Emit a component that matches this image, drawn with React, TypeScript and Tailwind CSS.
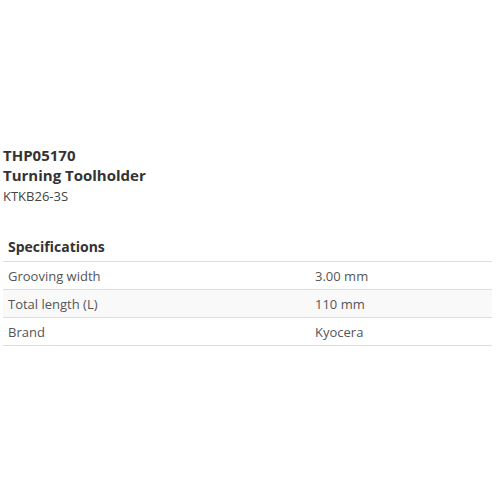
export default function App() {
  const specs = [
    { label: 'Grooving width', value: '3.00 mm' },
    { label: 'Total length (L)', value: '110 mm' },
    { label: 'Brand', value: 'Kyocera' },
  ];

  return (
    <main className="w-[500px] h-[500px] bg-white text-[#333] font-['Open_Sans',sans-serif] pt-[145px] pl-[3px] pr-[8px]">
      <h1 className="text-[15px] leading-[20px] font-bold">
        THP05170
        <br />
        Turning Toolholder
      </h1>
      <p className="text-[13px] leading-[20px] text-[#444] mt-[1px]">KTKB26-3S</p>

      <table className="w-[489px] mt-[23px] border-collapse text-[13px]">
        <thead>
          <tr className="border-b border-[#dedede]">
            <th colSpan={2} className="text-left text-[14px] font-bold pl-[5px] pt-[3px] h-[32px] align-middle">
              Specifications
            </th>
          </tr>
        </thead>
        <tbody>
          {specs.map((s, i) => (
            <tr key={s.label} className={`border-b border-[#dedede] ${i === 1 ? 'bg-[#f9f9f9]' : 'bg-white'}`}>
              <td className="pl-[5px] pt-[3px] h-[28px] w-[307px] text-[#555]">{s.label}</td>
              <td className="pl-[5px] pt-[3px] text-[#555]">{s.value}</td>
            </tr>
          ))}
        </tbody>
      </table>
    </main>
  );
}
